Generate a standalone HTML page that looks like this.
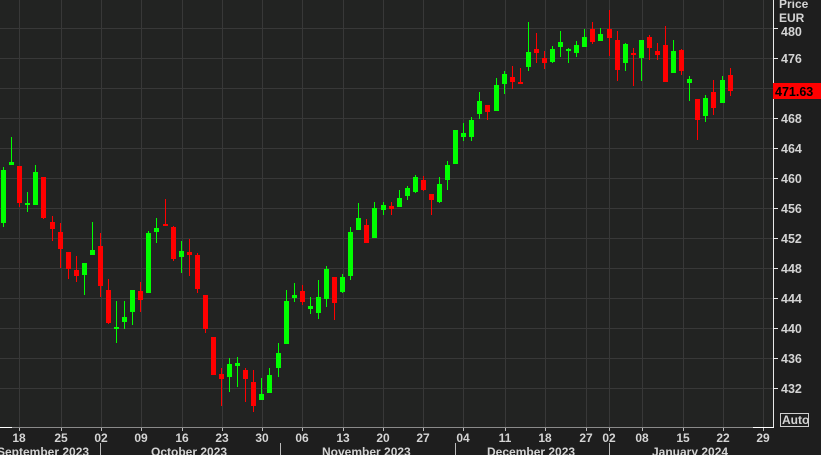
<!DOCTYPE html>
<html><head><meta charset="utf-8">
<style>
html,body{margin:0;padding:0;background:#1e1e1e;width:821px;height:455px;overflow:hidden}
svg{display:block}
text{font-family:"Liberation Sans",sans-serif;font-size:12px;fill:#d4d4d4;font-weight:bold}
</style></head><body>
<svg id="s" width="821" height="455" xmlns="http://www.w3.org/2000/svg">
<rect x="0" y="0" width="773" height="427" fill="#222322"/>
<g id="grid" stroke="#383838" stroke-width="1"></g>
<g id="c"></g>
<line x1="773.5" y1="0" x2="773.5" y2="427" stroke="#e8e8e8"/>
<line x1="0" y1="427.5" x2="773" y2="427.5" stroke="#8a8a8a"/>
<line x1="0" y1="427.5" x2="12" y2="427.5" stroke="#ffffff"/>
<line x1="753" y1="427.5" x2="774" y2="427.5" stroke="#ffffff"/>
<g id="ax"></g>
<text x="779" y="8">Price</text>
<text x="779" y="22">EUR</text>
<rect x="773" y="83" width="48" height="16" fill="#ff0000"/>
<text x="775" y="96" style="fill:#000;font-size:12.5px">471.63</text>
<rect x="780.5" y="413.5" width="28" height="13" fill="none" stroke="#cfcfcf"/>
<text x="782" y="424">Auto</text>
<text x="-3" y="456">September 2023</text>
<text x="151" y="456">October 2023</text>
<text x="322" y="456">November 2023</text>
<text x="487" y="456">December 2023</text>
<text x="652" y="456">January 2024</text>
</svg>
<script>
var NS="http://www.w3.org/2000/svg";
function el(p,t,a,txt){var e=document.createElementNS(NS,t);for(var k in a)e.setAttribute(k,a[k]);if(txt)e.textContent=txt;p.appendChild(e);return e;}
var g=document.getElementById('grid'),ax=document.getElementById('ax'),c=document.getElementById('c');
var prices=[480,476,472,468,464,460,456,452,448,444,440,436,432];
prices.forEach(function(p,i){var y=28+30*i;el(g,'line',{x1:0,x2:773,y1:y+.5,y2:y+.5});
el(ax,'line',{x1:773,x2:778,y1:y+.5,y2:y+.5,stroke:'#e8e8e8'});
if(p!==472)el(ax,'text',{x:781,y:y+(i==0?8:5),style:'font-size:12.5px'},String(p));});
var dates=[[19,'18'],[61,'25'],[101,'02'],[141,'09'],[182,'16'],[222,'23'],[262,'30'],[302,'06'],[343,'13'],[383,'20'],[423,'27'],[463,'04'],[505,'11'],[545,'18'],[586,'27'],[609,'02'],[642,'08'],[683,'15'],[723,'22'],[763,'29']];
dates.forEach(function(d){if(d[0]<773)el(g,'line',{x1:d[0]+.5,x2:d[0]+.5,y1:0,y2:427});
el(ax,'line',{x1:d[0]+.5,x2:d[0]+.5,y1:428,y2:431,stroke:'#bbb'});
el(ax,'text',{x:d[0],y:442,'text-anchor':'middle'},d[1]);});
[100,280,455,609].forEach(function(x){el(ax,'line',{x1:x+.5,x2:x+.5,y1:443,y2:455,stroke:'#bbb'});});
var D=[
[3,167,227,170,223,'g'],[11,137,165,162,165,'g'],[19,166,207,166,203,'r'],[27,192,212,203,205,'g'],[35,165,205,172,205,'g'],
[43,177,219,177,218,'r'],[52,216,241,222,229,'r'],[60,223,268,232,249,'r'],[68,252,279,252,269,'r'],[76,256,282,270,276,'r'],
[84,263,295,263,275,'g'],[92,222,255,250,255,'g'],[100,233,297,246,286,'r'],[108,279,324,290,323,'r'],[116,301,343,327,329,'g'],
[124,301,329,317,322,'g'],[132,290,325,290,312,'g'],[140,282,312,291,300,'r'],[148,231,293,233,293,'g'],[156,218,243,228,232,'g'],
[165,199,226,224,226,'r'],[173,226,261,227,259,'r'],[181,241,273,251,257,'g'],[189,239,276,252,255,'r'],[197,253,293,255,289,'r'],
[205,295,333,295,329,'r'],[213,337,375,337,375,'r'],[221,368,406,374,379,'r'],[229,358,392,364,377,'g'],[237,357,387,363,366,'g'],
[245,368,402,370,379,'r'],[253,370,412,382,406,'r'],[261,378,400,394,400,'g'],[269,368,393,375,393,'g'],[278,343,377,353,368,'g'],
[286,290,344,301,344,'g'],[294,283,302,295,298,'g'],[302,285,305,291,302,'r'],[310,297,314,306,309,'g'],[318,280,319,297,313,'g'],
[326,266,307,269,299,'g'],[334,277,320,277,303,'r'],[342,274,293,277,292,'g'],[350,227,280,232,276,'g'],[358,203,230,218,230,'g'],
[366,219,243,225,243,'r'],[374,202,238,208,238,'g'],[383,202,215,205,210,'g'],[391,202,215,206,209,'r'],[399,190,207,198,207,'g'],
[407,186,200,188,196,'g'],[415,175,193,177,192,'g'],[423,176,191,180,190,'r'],[431,194,215,194,200,'r'],[439,177,203,184,202,'g'],
[447,161,190,165,180,'g'],[455,130,164,130,164,'g'],[463,123,141,133,137,'g'],[471,117,141,120,137,'g'],[479,92,119,101,114,'g'],
[487,105,120,105,112,'r'],[496,78,111,85,111,'g'],[504,71,94,74,84,'g'],[512,66,89,77,82,'r'],[520,68,84,82,84,'r'],
[528,22,71,52,67,'g'],[536,33,63,49,53,'r'],[544,51,69,58,63,'r'],[552,46,63,49,62,'g'],[560,31,57,42,47,'g'],
[568,48,63,49,51,'g'],[576,41,57,45,53,'g'],[584,29,47,37,47,'g'],[592,22,44,29,42,'r'],[600,28,41,34,41,'g'],
[609,10,56,29,38,'r'],[617,31,81,40,70,'r'],[625,43,71,44,63,'g'],[633,48,86,53,55,'r'],[641,40,81,40,58,'g'],
[649,35,60,37,48,'r'],[657,43,60,51,55,'r'],[665,26,82,45,82,'r'],[673,40,73,51,73,'g'],[681,49,75,50,71,'r'],
[689,76,101,79,83,'g'],[697,99,140,99,120,'r'],[705,95,122,98,116,'g'],[713,80,115,92,108,'r'],[722,76,103,80,103,'g'],
[730,68,96,75,91,'r']];
D.forEach(function(d){var col=d[5]=='g'?'#00ff00':'#ff0000';
el(c,'rect',{x:d[0],y:d[1],width:1,height:d[2]-d[1],fill:col});
el(c,'rect',{x:d[0]-2,y:d[3],width:5,height:Math.max(2,d[4]-d[3]),fill:col});});
</script>
</body></html>
